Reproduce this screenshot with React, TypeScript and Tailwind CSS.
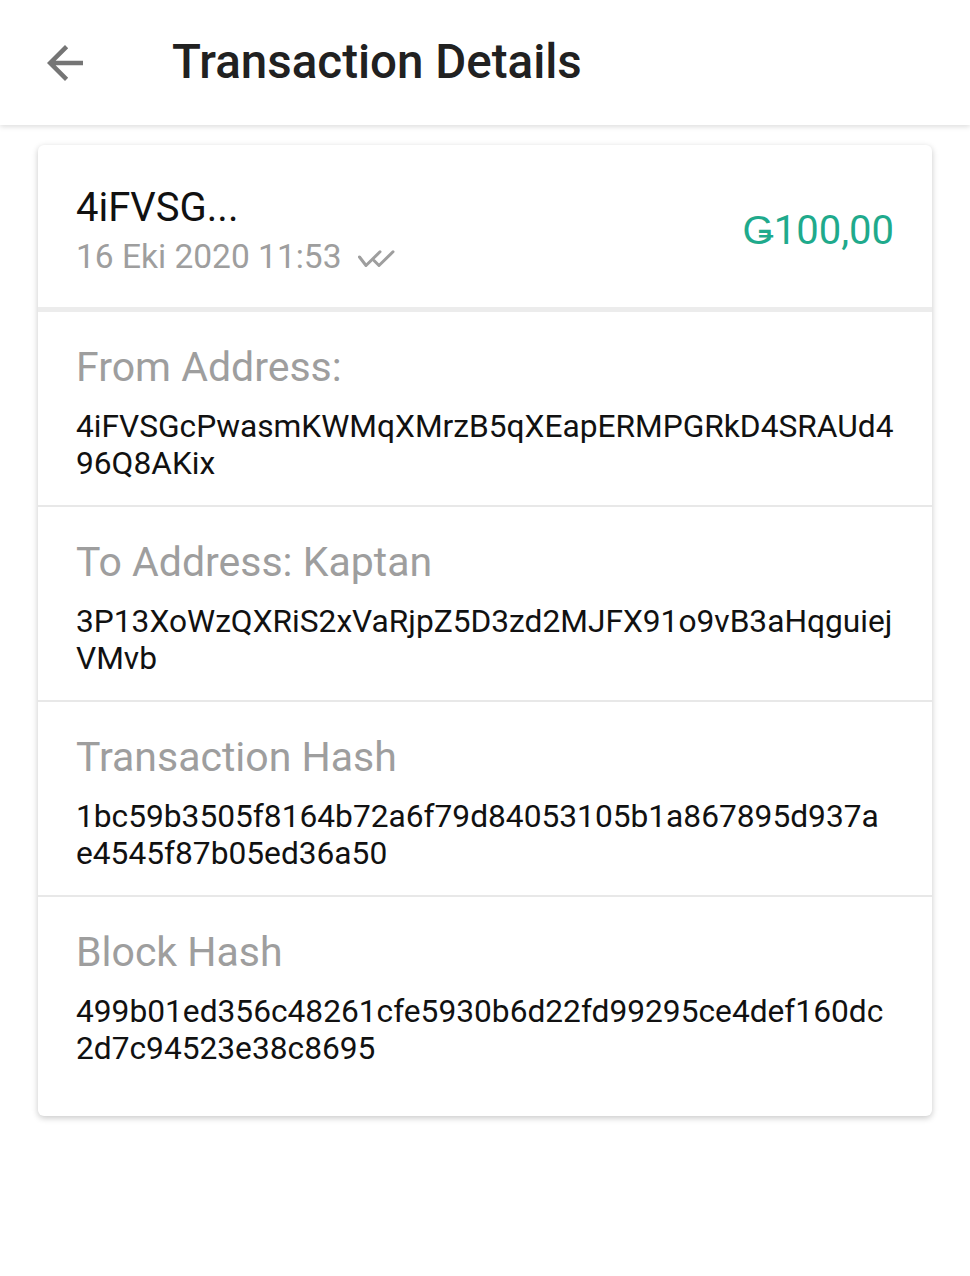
import { MdArrowBack } from "react-icons/md";

const rows = [
    { label: "From Address:", value: "4iFVSGcPwasmKWMqXMrzB5qXEapERMPGRkD4SRAUd496Q8AKix" },
    { label: "To Address: Kaptan", value: "3P13XoWzQXRiS2xVaRjpZ5D3zd2MJFX91o9vB3aHqguiejVMvb" },
    { label: "Transaction Hash", value: "1bc59b3505f8164b72a6f79d84053105b1a867895d937ae4545f87b05ed36a50" },
    { label: "Block Hash", value: "499b01ed356c48261cfe5930b6d22fd99295ce4def160dc2d7c94523e38c8695" },
];

// double check mark, drawn thin like the original
const DoubleCheck = () => (
    <svg width="37" height="18" viewBox="0 0 37 18" fill="none" stroke="#9e9e9e" strokeWidth="3" strokeLinecap="round" strokeLinejoin="round">
        <path d="M1.5 7 L8 15.5 L22 1.8" />
        <path d="M16 10.5 L21 15.5 L35 1.8" />
    </svg>
);

const App = () => {
    return (
        <div className="min-h-[1276px] bg-white font-['Roboto',sans-serif]">

            <div className="h-[125px] flex items-center pl-[38px] bg-white shadow-[0_2px_5px_rgba(0,0,0,0.13)] relative z-10">
                <MdArrowBack size={54} className="text-[#757575]" />
                <p className="ml-[80px] text-[47.5px] font-medium text-[#212121] leading-none">Transaction Details</p>
            </div>

            <div className="mx-[38px] mt-[20px] bg-white rounded-[6px] shadow-[0_2px_6px_rgba(0,0,0,0.22)] overflow-hidden">

                <div className="flex items-center justify-between px-[38px] pt-[39px] pb-[30px]">
                    <div className="flex flex-col gap-[6px]">
                        <p className="text-[40px] leading-[47px] text-[#111]">4iFVSG...</p>
                        <div className="flex items-center gap-[17px]">
                            <p className="text-[33.5px] leading-[40px] text-[#9e9e9e]">16 Eki 2020 11:53</p>
                            <div className="mt-[4px]">
                                <DoubleCheck />
                            </div>
                        </div>
                    </div>
                    <p className="text-[40px] leading-[47px] text-[#1faa8c]">Ǥ100,00</p>
                </div>

                <div className="h-[5px] bg-[#ececec]"></div>

                {rows.map((row, i) => (
                    <div
                        key={row.label}
                        className={i === rows.length - 1 ? "px-[38px] pt-[31px] pb-[49px]" : "px-[38px] pt-[31px] pb-[23px] border-b-2 border-[#e8e8e8]"}
                    >
                        <p className="text-[41px] leading-[48px] text-[#9e9e9e]">{row.label}</p>
                        <p className="mt-[17px] text-[31.7px] leading-[37px] text-[#111] break-all">{row.value}</p>
                    </div>
                ))}

            </div>

        </div>
    )
}

export default App;
